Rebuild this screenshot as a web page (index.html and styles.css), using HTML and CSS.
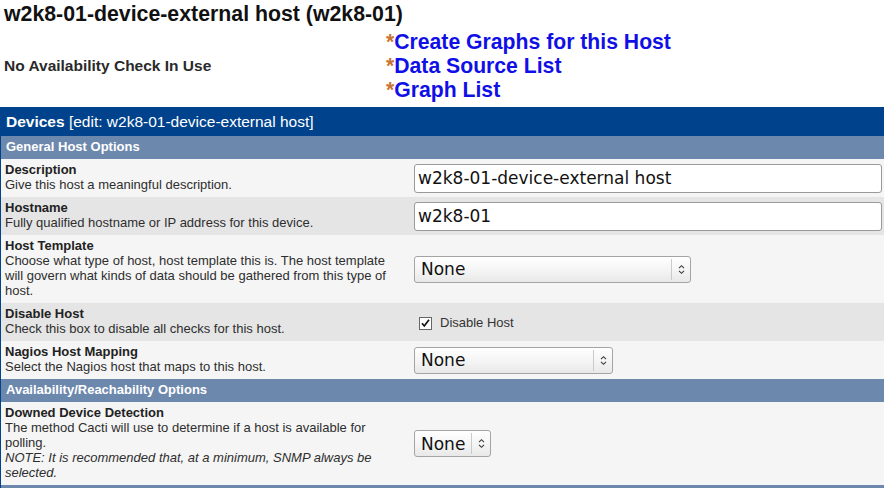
FILE: index.html
```html
<!DOCTYPE html>
<html lang="en">
<head>
<meta charset="utf-8">
<title>Devices - w2k8-01-device-external host</title>
<link rel="stylesheet" href="styles.css">
</head>
<body>
<div class="page">
  <h1 class="host-title">w2k8-01-device-external host (w2k8-01)</h1>
  <div class="host-summary">
    <div class="avail-status">No Availability Check In Use</div>
    <ul class="host-links">
      <li><span class="star">*</span><a href="#">Create Graphs for this Host</a></li>
      <li><span class="star">*</span><a href="#">Data Source List</a></li>
      <li><span class="star">*</span><a href="#">Graph List</a></li>
    </ul>
  </div>

  <div class="edit-table">
    <div class="table-title"><b>Devices</b> [edit: w2k8-01-device-external host]</div>

    <div class="section-head">General Host Options</div>

    <div class="form-row odd">
      <div class="field-label">
        <div class="label-title">Description</div>
        <div class="label-desc">Give this host a meaningful description.</div>
      </div>
      <div class="field-control">
        <input class="text-input" type="text" value="w2k8-01-device-external host">
      </div>
    </div>

    <div class="form-row even">
      <div class="field-label">
        <div class="label-title">Hostname</div>
        <div class="label-desc">Fully qualified hostname or IP address for this device.</div>
      </div>
      <div class="field-control">
        <input class="text-input" type="text" value="w2k8-01">
      </div>
    </div>

    <div class="form-row odd">
      <div class="field-label">
        <div class="label-title">Host Template</div>
        <div class="label-desc">Choose what type of host, host template this is. The host template will govern what kinds of data should be gathered from this type of host.</div>
      </div>
      <div class="field-control">
        <div class="select sel-template">
          <span class="sel-text">None</span>
          <span class="sel-btn"><svg width="7" height="11" viewBox="0 0 7 11"><path d="M1 4.2 L3.5 1.7 L6 4.2 M1 6.8 L3.5 9.3 L6 6.8" fill="none" stroke="#3a3a3a" stroke-width="1.1"/></svg></span>
        </div>
      </div>
    </div>

    <div class="form-row even">
      <div class="field-label">
        <div class="label-title">Disable Host</div>
        <div class="label-desc">Check this box to disable all checks for this host.</div>
      </div>
      <div class="field-control">
        <span class="check-box"><svg width="11" height="11" viewBox="0 0 11 11"><path d="M2 5.3 L4.3 8 L9 1.8" fill="none" stroke="#111" stroke-width="1.7"/></svg></span>
        <span class="check-label">Disable Host</span>
      </div>
    </div>

    <div class="form-row odd">
      <div class="field-label">
        <div class="label-title">Nagios Host Mapping</div>
        <div class="label-desc">Select the Nagios host that maps to this host.</div>
      </div>
      <div class="field-control">
        <div class="select sel-nagios">
          <span class="sel-text">None</span>
          <span class="sel-btn"><svg width="7" height="11" viewBox="0 0 7 11"><path d="M1 4.2 L3.5 1.7 L6 4.2 M1 6.8 L3.5 9.3 L6 6.8" fill="none" stroke="#3a3a3a" stroke-width="1.1"/></svg></span>
        </div>
      </div>
    </div>

    <div class="section-head">Availability/Reachability Options</div>

    <div class="form-row odd">
      <div class="field-label">
        <div class="label-title">Downed Device Detection</div>
        <div class="label-desc">The method Cacti will use to determine if a host is available for polling.<br><span class="note">NOTE: It is recommended that, at a minimum, SNMP always be selected.</span></div>
      </div>
      <div class="field-control">
        <div class="select sel-downed">
          <span class="sel-text">None</span>
          <span class="sel-btn"><svg width="7" height="11" viewBox="0 0 7 11"><path d="M1 4.2 L3.5 1.7 L6 4.2 M1 6.8 L3.5 9.3 L6 6.8" fill="none" stroke="#3a3a3a" stroke-width="1.1"/></svg></span>
        </div>
      </div>
    </div>

    <div class="section-head section-next"></div>
  </div>
</div>
</body>
</html>
```

FILE: styles.css
```css
html, body {
  margin: 0;
  padding: 0;
  overflow: hidden;
  background: #fff;
}

body {
  font-family: "Liberation Sans", Arial, sans-serif;
  color: #333;
}

.host-title {
  margin: 0;
  padding: 2px 0 0 4px;
  font-size: 21.3px;
  line-height: 24px;
  font-weight: bold;
  color: #111;
}

.host-summary {
  display: flex;
  align-items: center;
  margin-top: 4px;
  padding-left: 4px;
}

.avail-status {
  width: 382px;
  font-size: 15.5px;
  font-weight: bold;
  color: #2a2a2a;
}

.host-links {
  list-style: none;
  margin: 0;
  padding: 0;
  font-size: 21.2px;
  line-height: 24px;
  font-weight: bold;
}

.host-links a {
  color: #1010e6;
  text-decoration: none;
}

.star {
  color: #c87533;
}

.edit-table {
  margin-top: 5px;
  border-left: 1px solid #00438c;
}

.table-title {
  background: #00438c;
  color: #fff;
  font-size: 15.5px;
  line-height: 19px;
  padding: 5px 5px;
}

.section-head {
  background: #6d88ad;
  color: #fff;
  font-size: 13px;
  font-weight: bold;
  line-height: 16px;
  padding: 3px 5px 4px;
}

.section-next {
  height: 16px;
}

.form-row {
  display: grid;
  grid-template-columns: 409px 1fr;
}

.odd {
  background: #f5f5f5;
}

.even {
  background: #e5e5e5;
}

.field-label {
  padding: 3px 4px 5px;
  font-size: 13px;
  line-height: 15px;
}

.label-title {
  font-weight: bold;
  color: #222;
}

.label-desc {
  color: #2e2e2e;
}

.note {
  font-style: italic;
}

.field-control {
  display: flex;
  align-items: center;
  padding-left: 4px;
}

.text-input {
  box-sizing: border-box;
  width: 468px;
  height: 29px;
  margin: 0;
  padding: 0 3px;
  border: 1px solid #9a9a9a;
  border-radius: 3px;
  background: #fff;
  font-family: "DejaVu Sans", sans-serif;
  font-size: 17px;
  color: #111;
  outline: none;
}

.select {
  box-sizing: border-box;
  display: flex;
  align-items: center;
  height: 27px;
  border: 1px solid #a4a4a4;
  border-radius: 3px;
  background: linear-gradient(#ffffff, #f3f3f3 60%, #e8e8e8);
  font-family: "DejaVu Sans", sans-serif;
  font-size: 17px;
  color: #111;
}

.sel-template {
  width: 277px;
}

.sel-nagios {
  width: 199px;
}

.sel-text {
  flex: 1;
  padding: 0 6px;
}

.sel-downed .sel-text {
  flex: none;
}

.sel-btn {
  align-self: stretch;
  width: 18px;
  margin: 2px 0;
  border-left: 1px solid #cacaca;
  display: flex;
  align-items: center;
  justify-content: center;
}

.check-box {
  box-sizing: border-box;
  display: flex;
  align-items: center;
  justify-content: center;
  width: 13px;
  height: 13px;
  margin: 2px 8px 0 5px;
  border: 1px solid #666;
  background: #fff;
}

.check-label {
  font-size: 13px;
  color: #333;
}
```
